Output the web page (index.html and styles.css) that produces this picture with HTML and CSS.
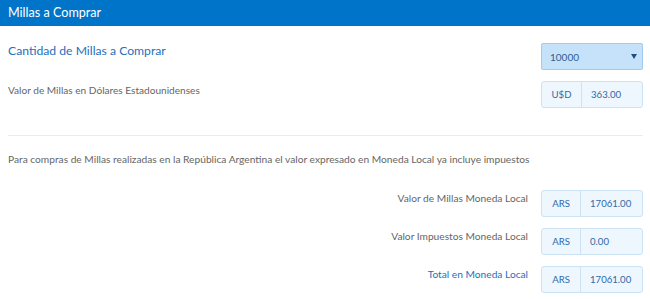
FILE: index.html
```html
<!DOCTYPE html>
<html lang="es">
<head>
<meta charset="utf-8">
<title>Millas a Comprar</title>
<link rel="stylesheet" href="styles.css">
</head>
<body>
<div class="panel">
  <div class="panel-head">Millas a Comprar</div>
  <div class="panel-body">
    <div class="row row-first">
      <div class="title">Cantidad de Millas a Comprar</div>
      <div class="select"><span>10000</span><span class="caret"></span></div>
    </div>
    <div class="row row-usd">
      <div class="label-left">Valor de Millas en Dólares Estadounidenses</div>
      <div class="field"><span class="prefix usd">U$D</span><span class="value">363.00</span></div>
    </div>
    <div class="sep"></div>
    <p class="note">Para compras de Millas realizadas en la República Argentina el valor expresado en Moneda Local ya incluye impuestos</p>
    <div class="local-rows">
      <div class="row-right">
        <div class="label-right">Valor de Millas Moneda Local</div>
        <div class="field"><span class="prefix">ARS</span><span class="value">17061.00</span></div>
      </div>
      <div class="row-right">
        <div class="label-right">Valor Impuestos Moneda Local</div>
        <div class="field"><span class="prefix">ARS</span><span class="value">0.00</span></div>
      </div>
      <div class="row-right">
        <div class="label-right total">Total en Moneda Local</div>
        <div class="field"><span class="prefix">ARS</span><span class="value">17061.00</span></div>
      </div>
    </div>
  </div>
</div>
</body>
</html>
```
FILE: styles.css
```css
html, body {
  margin: 0;
  padding: 0;
  background: #ffffff;
}
body {
  font-family: Lato, "Open Sans", Arial, sans-serif;
  color: #666666;
  width: 650px;
  height: 299px;
  overflow: hidden;
}
.panel-head {
  height: 26px;
  line-height: 26px;
  background: #0074c8;
  color: #ffffff;
  font-size: 12.6px;
  padding-left: 8px;
}
.panel-body {
  padding: 0 7px 0 8px;
}
.row {
  display: flex;
  justify-content: space-between;
  align-items: flex-start;
}
.row-first {
  margin-top: 17px;
}
.title {
  color: #2470bd;
  font-size: 12.2px;
  line-height: 16px;
}
.select {
  box-sizing: border-box;
  width: 102px;
  height: 27px;
  background: #c6e2fb;
  border: 1px solid #9fcbf0;
  border-radius: 2px;
  display: flex;
  align-items: center;
  justify-content: space-between;
  padding: 0 5px 0 8px;
  font-size: 10px;
  color: #2f5f8f;
}
.caret {
  width: 0;
  height: 0;
  border-left: 3px solid transparent;
  border-right: 3px solid transparent;
  border-top: 5px solid #1f4f80;
}
.row-usd {
  margin-top: 11px;
}
.label-left {
  font-size: 10.1px;
  line-height: 14px;
  padding-top: 2px;
}
.field {
  box-sizing: border-box;
  width: 102px;
  height: 27px;
  display: flex;
  background: #eef6fe;
  border: 1px solid #cce2f5;
  border-radius: 3px;
  font-size: 9.6px;
  color: #2f6aa8;
}
.prefix {
  width: 38px;
  flex: none;
  display: flex;
  align-items: center;
  justify-content: center;
  border-right: 1px solid #cce2f5;
}
.prefix.usd {
  width: 39px;
}
.value {
  display: flex;
  align-items: center;
  padding-left: 9px;
}
.sep {
  height: 1px;
  background: #ececec;
  margin-top: 27px;
}
.note {
  margin: 16px 0 0 0;
  font-size: 10.2px;
  line-height: 14px;
}
.local-rows {
  margin-top: 24px;
  display: flex;
  flex-direction: column;
  gap: 11px;
}
.row-right {
  display: flex;
  justify-content: flex-end;
  align-items: flex-start;
  gap: 13px;
}
.label-right {
  font-size: 10.2px;
  line-height: 14px;
  padding-top: 1px;
}
.label-right.total {
  color: #2470bd;
}
```
